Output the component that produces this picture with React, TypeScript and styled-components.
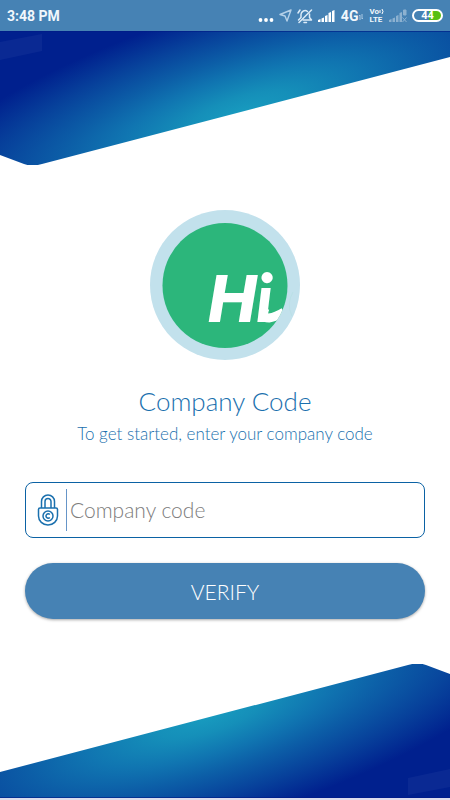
import React from "react";
import styled, { createGlobalStyle } from "styled-components";

const GlobalStyle = createGlobalStyle`
  *, *::before, *::after { box-sizing: border-box; }
  body { margin: 0; background: #ffffff; }
`;

const Page = styled.div`
  display: flex;
  flex-direction: column;
  min-height: 100vh;
  overflow: hidden;
  border-bottom: 2px solid #dcdcec;
  background: #ffffff;
  font-family: Lato, "Open Sans", sans-serif;
  font-weight: 300;
`;

const StatusBar = styled.header`
  display: flex;
  align-items: center;
  justify-content: space-between;
  height: 31px;
  padding: 0 7px;
  background: #4682b4;
  color: #f1f7fc;
  font-family: Roboto, sans-serif;
  font-weight: 700;
`;

const Clock = styled.time`
  font-size: 14px;
  line-height: 20px;
`;

const StatusIcons = styled.div`
  display: flex;
  align-items: center;
  gap: 5px;
`;

const Network = styled.span`
  display: flex;
  align-items: center;
  font-size: 14px;
  line-height: 20px;
`;

const Volte = styled.span`
  display: flex;
  flex-direction: column;
  font-size: 8px;
  line-height: 8px;
`;

const VolteLine = styled.span`
  display: flex;
  align-items: center;
  height: 8px;
`;

const Battery = styled.span`
  display: flex;
  align-items: center;
  justify-content: center;
  width: 31px;
  height: 13px;
  border: 2px solid #ffffff;
  border-radius: 7px;
  background: linear-gradient(90deg, #4682b4 55%, #58bf13 55%);
  color: #ffffff;
  font-size: 11px;
  line-height: 11px;
`;

const WaveArt = styled.svg<{ $flipped?: boolean }>`
  display: block;
  flex: none;
  width: 100%;
  height: 134px;
  transform: ${({ $flipped }) => ($flipped ? "rotate(180deg)" : "none")};
`;

const Main = styled.main`
  display: flex;
  flex: 1;
  flex-direction: column;
  align-items: center;
  justify-content: center;
  padding: 0 25px;
`;

const LogoRing = styled.svg`
  display: block;
  width: 150px;
  height: 150px;
`;

const Title = styled.h1`
  margin: 23px 0 0;
  color: #1a70ae;
  font-size: 26px;
  font-weight: 300;
  line-height: 36px;
  text-align: center;
`;

const Subtitle = styled.p`
  margin: 0;
  color: #1a70ae;
  font-size: 17px;
  line-height: 30px;
  text-align: center;
`;

const Form = styled.form`
  display: flex;
  flex-direction: column;
  gap: 25px;
  width: 100%;
  margin-top: 33px;
`;

const Field = styled.label`
  display: flex;
  align-items: center;
  height: 56px;
  padding: 0 11px;
  border: 1px solid #0b62a4;
  border-radius: 8px;
  background: #ffffff;
`;

const LockIcon = styled.svg`
  flex: none;
  width: 22px;
  height: 34px;
`;

const CodeInput = styled.input`
  flex: 1;
  min-width: 0;
  height: 42px;
  margin-left: 7px;
  padding: 0 0 2px 3px;
  border: 0;
  border-left: 1px solid #6695c8;
  outline: 0;
  background: transparent;
  color: #1a70ae;
  font: inherit;
  font-size: 21px;

  &::placeholder {
    color: #7c7c7c;
    opacity: 1;
  }
`;

const VerifyButton = styled.button`
  height: 56px;
  border: 0;
  border-radius: 28px;
  background: #4682b4;
  box-shadow: 0 1px 3px rgba(0, 0, 0, 0.35);
  color: #ffffff;
  font: inherit;
  font-size: 21px;
  cursor: pointer;
`;

function Wave({ id, flipped }: { id: string; flipped?: boolean }) {
  return (
    <WaveArt $flipped={flipped} viewBox="0 0 450 134" preserveAspectRatio="none" aria-hidden="true">
      <defs>
        <radialGradient
          id={id}
          gradientUnits="userSpaceOnUse"
          cx="0"
          cy="0"
          r="1"
          gradientTransform="translate(242 82) rotate(-17) scale(360 108)"
        >
          <stop offset="0" stopColor="#189bbf" />
          <stop offset="0.15" stopColor="#158fb9" />
          <stop offset="0.35" stopColor="#1075b1" />
          <stop offset="0.52" stopColor="#0c5ea7" />
          <stop offset="0.75" stopColor="#07419b" />
          <stop offset="1" stopColor="#00208e" />
        </radialGradient>
      </defs>
      <path d="M0 0H450V26L42 133Q32 136 24 133L0 124Z" fill={`url(#${id})`} />
      <path d="M0 11L42 3V20L0 29Z" fill="#2440a0" opacity="0.28" />
      <path d="M0 0H450V1H0Z" fill="#001a86" opacity="0.6" />
    </WaveArt>
  );
}

function Signal({ faint }: { faint?: boolean }) {
  return (
    <svg width="18" height="14" viewBox="0 0 18 14" fill="#fff" opacity={faint ? 0.38 : 1} aria-hidden="true">
      <path d="M0 13V11L2.500 10V13ZM3.500 13V9.500L6 8.500V13ZM7 13V7L9.500 6V13ZM10.500 13V4L13 3V13Z" />
      {faint ? (
        <path d="M14.500 1H17V6H14.500ZM13.500 8.500L17.500 13M17.500 8.500L13.500 13" stroke="#fff" strokeWidth="1" />
      ) : (
        <path d="M14 13V2L16.500 1V13Z" />
      )}
    </svg>
  );
}

export default function App() {
  return (
    <Page>
      <GlobalStyle />
      <StatusBar>
        <Clock>3:48 PM</Clock>
        <StatusIcons>
          <svg width="16" height="14" viewBox="0 0 16 14" fill="#fff" aria-hidden="true">
            <circle cx="2.500" cy="11" r="1.900" />
            <circle cx="8" cy="11" r="1.900" />
            <circle cx="13.500" cy="11" r="1.900" />
          </svg>
          <svg width="13" height="13" viewBox="0 0 13 13" fill="none" stroke="#b4d0e8" strokeWidth="1.400" strokeLinejoin="round" aria-hidden="true">
            <path d="M12 1L1 5.500L6 7L8 12Z" />
          </svg>
          <svg width="16" height="16" viewBox="0 0 16 16" fill="none" stroke="#dcebf8" strokeWidth="1.500" strokeLinecap="round" strokeLinejoin="round" aria-hidden="true">
            <path d="M4 9.500V6.500A4 4 0 0 1 10.500 3.500M12.500 6V9.500L14.500 12H6M1.500 12L4 9.500M7 14.500H9.500" />
            <path d="M2 14.500L14.500 2M1 5L3 2" />
          </svg>
          <Signal />
          <Network>
            4G
            <svg width="6" height="10" viewBox="0 0 6 10" fill="none" stroke="#a9c8e2" aria-hidden="true">
              <path d="M2 9V4M1 5L2 4M4 3V8M5 7L4 8" />
            </svg>
          </Network>
          <Volte>
            <VolteLine>
              Vo
              <svg width="5" height="7" viewBox="0 0 5 7" fill="none" stroke="#fff" aria-hidden="true">
                <path d="M1 2V5M3 1Q5 3.500 3 6" />
              </svg>
            </VolteLine>
            <VolteLine>LTE</VolteLine>
          </Volte>
          <Signal faint />
          <Battery>44</Battery>
        </StatusIcons>
      </StatusBar>

      <Wave id="wave-top" />

      <Main>
        <LogoRing viewBox="0 0 150 150" role="img" aria-label="Hi">
          <defs>
            <clipPath id="logo-disc">
              <circle cx="75" cy="75.500" r="62.500" />
            </clipPath>
          </defs>
          <circle cx="75" cy="75" r="75" fill="#c2e1ec" />
          <circle cx="75" cy="75.500" r="62.500" fill="#2cb67b" />
          <path d="M143 82Q136 94 142 106" fill="none" stroke="#b7dfe5" strokeWidth="0.800" />
          <g clipPath="url(#logo-disc)" fill="#fff" fontStyle="italic">
            <text y="112">
              <tspan x="58" fontFamily="Inter, sans-serif" fontSize="65" fontWeight="800">H</tspan>
              <tspan x="106" fontFamily="Lato, sans-serif" fontSize="67" fontWeight="900">i</tspan>
            </text>
            <path d="M115 98Q111 108 119 108Q126 107 134 102" fill="none" stroke="#fff" strokeWidth="9" />
          </g>
        </LogoRing>
        <Title>Company Code</Title>
        <Subtitle>To get started, enter your company code</Subtitle>
        <Form onSubmit={(event) => event.preventDefault()}>
          <Field>
            <LockIcon viewBox="0 0 22 34" fill="none" stroke="#1a70ae" strokeWidth="1.500" aria-hidden="true">
              <path d="M4.500 15V8.500A6.500 6.500 0 0 1 17.500 8.500V15M8 15V8.500A3 3 0 0 1 14 8.500V15" />
              <path d="M3 15H19Q20.500 15 20.500 16.500V23A9.500 9 0 0 1 1.500 23V16.500Q1.500 15 3 15Z" />
              <circle cx="11" cy="23" r="5" />
              <path d="M12.800 21.500A2.200 2.200 0 1 0 12.800 24.500" />
            </LockIcon>
            <CodeInput type="text" name="companyCode" placeholder="Company code" aria-label="Company code" />
          </Field>
          <VerifyButton type="submit">VERIFY</VerifyButton>
        </Form>
      </Main>

      <Wave id="wave-bottom" flipped />
    </Page>
  );
}
